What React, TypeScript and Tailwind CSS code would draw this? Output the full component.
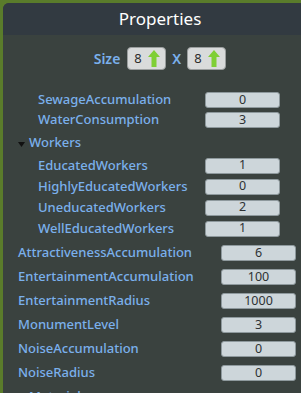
import React from 'react'

const font = { fontFamily: '"Noto Sans", "Open Sans", sans-serif' }

function UpArrow() {
  return (
    <svg width="12" height="17" viewBox="0 0 12 17">
      <path d="M6 0 L12 7 L8.5 7 L8.5 17 L3.5 17 L3.5 7 L0 7 Z" fill="#7fcf35" />
    </svg>
  )
}

function SizeBox({ value }: { value: string }) {
  return (
    <div className="flex h-[23px] w-[39px] items-center justify-between rounded-[4px] border border-[#9a9e9e] bg-[#d9dbdb] pl-[6px] pr-[5px]">
      <span className="text-[13px] text-[#2c2c2c]">{value}</span>
      <UpArrow />
    </div>
  )
}

function ValueBox({ value }: { value: string }) {
  return (
    <div className="flex h-[16px] w-[75px] items-center justify-center rounded-[3px] border border-[#8e999d] bg-[#cdd6da] text-[12.5px] leading-none text-[#2e3234]">
      {value}
    </div>
  )
}

function Triangle() {
  return (
    <svg width="7" height="5" viewBox="0 0 7 5" className="mr-[4px] mt-[2px]">
      <path d="M0 0 L7 0 L3.5 5 Z" fill="#111" />
    </svg>
  )
}

const top = [
  ['SewageAccumulation', '0'],
  ['WaterConsumption', '3'],
]

const workers = [
  ['EducatedWorkers', '1'],
  ['HighlyEducatedWorkers', '0'],
  ['UneducatedWorkers', '2'],
  ['WellEducatedWorkers', '1'],
]

const rest = [
  ['AttractivenessAccumulation', '6'],
  ['EntertainmentAccumulation', '100'],
  ['EntertainmentRadius', '1000'],
  ['MonumentLevel', '3'],
  ['NoiseAccumulation', '0'],
  ['NoiseRadius', '0'],
]

const label = 'text-[13px] font-medium text-[#7ab0ec]'

export default function App() {
  return (
    <div className="h-[393px] w-[301px] overflow-hidden bg-[#5a7c2b] pl-[3px] pt-[3px]" style={font}>
      <div className="h-[420px] w-[314px] overflow-hidden rounded-tl-[6px] bg-[#3a423f]">
        <div className="flex h-[32px] items-center justify-center bg-[#323a41] text-[17px] text-white">
          Properties
        </div>

        <div className="mt-[12px] flex h-[23px] items-center justify-center gap-[6px]">
          <span className="mr-[1px] text-[14px] font-semibold text-[#7ab0ec]">Size</span>
          <SizeBox value="8" />
          <span className="text-[14px] font-semibold text-[#7ab0ec]">X</span>
          <SizeBox value="8" />
        </div>

        <div className="mt-[20px]">
          {top.map(([k, v]) => (
            <div key={k} className="flex h-[20px] items-center justify-between pl-[35px] pr-[37px]">
              <span className={label}>{k}</span>
              <ValueBox value={v} />
            </div>
          ))}
        </div>

        <div className="mt-[3px] flex h-[20px] items-center pl-[15px]">
          <Triangle />
          <span className={label}>Workers</span>
        </div>

        <div className="mt-[2px]">
          {workers.map(([k, v]) => (
            <div key={k} className="flex h-[21px] items-center justify-between pl-[35px] pr-[37px]">
              <span className={label}>{k}</span>
              <ValueBox value={v} />
            </div>
          ))}
        </div>

        <div className="mt-[2px]">
          {rest.map(([k, v]) => (
            <div key={k} className="flex h-[24px] items-center justify-between pl-[15px] pr-[21px]">
              <span className={label}>{k}</span>
              <ValueBox value={v} />
            </div>
          ))}
          <div className="flex h-[24px] items-center pl-[15px]">
            <Triangle />
            <span className={label}>Materials</span>
          </div>
        </div>
      </div>
    </div>
  )
}
